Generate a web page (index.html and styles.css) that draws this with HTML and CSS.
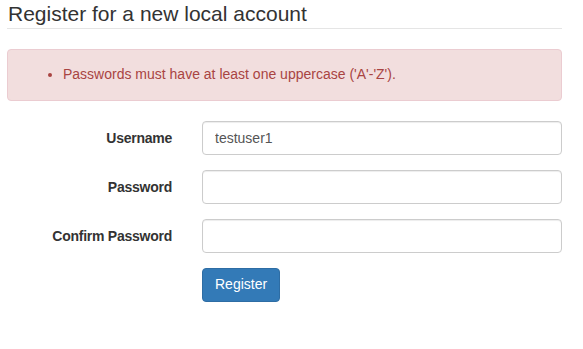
FILE: index.html
```html
<!DOCTYPE html>
<html lang="en">
<head>
    <meta charset="UTF-8">
    <meta name="viewport" content="width=device-width, initial-scale=1.0">
    <title>Register</title>
    <link rel="stylesheet" href="styles.css">
</head>
<body>
    <div class="page">
        <h2 class="page-title">Register for a new local account</h2>
        <hr class="divider">

        <div class="alert alert-danger">
            <ul class="error-list">
                <li>Passwords must have at least one uppercase ('A'-'Z').</li>
            </ul>
        </div>

        <form class="register-form">
            <label class="form-label" for="username">Username</label>
            <input class="form-input" id="username" type="text" value="testuser1">

            <label class="form-label" for="password">Password</label>
            <input class="form-input" id="password" type="password">

            <label class="form-label" for="confirm">Confirm Password</label>
            <input class="form-input" id="confirm" type="password">

            <div class="form-actions">
                <button type="submit" class="btn-primary">Register</button>
            </div>
        </form>
    </div>
</body>
</html>
```

FILE: styles.css
```css
:root {
    --text-primary: #333;
    --text-input: #555;
    --border-input: #ccc;
    --divider: #e5e5e5;
    --danger-bg: #f2dede;
    --danger-border: #ebccd1;
    --danger-text: #a94442;
    --primary: #337ab7;
    --primary-border: #2e6da4;
    --font-family-sans: "Liberation Sans", Arial, sans-serif;
}

*, *::before, *::after {
    box-sizing: border-box;
}

body {
    margin: 0;
    font-family: var(--font-family-sans);
    font-size: 14px;
    line-height: 1.42857;
    color: var(--text-primary);
    background: #fff;
}

.page {
    width: 555px;
    margin-left: 7px;
}

.page-title {
    margin: 0;
    padding: 2px 0 0 1px;
    font-size: 21px;
    font-weight: 400;
    line-height: 24px;
}

.divider {
    margin: 2px 0 20px;
    border: 0;
    border-top: 1px solid var(--divider);
}

.alert {
    padding: 15px;
    border: 1px solid transparent;
    border-radius: 4px;
    margin-bottom: 20px;
}

.alert-danger {
    background-color: var(--danger-bg);
    border-color: var(--danger-border);
    color: var(--danger-text);
}

.error-list {
    margin: 0;
    padding-left: 40px;
}

.register-form {
    display: grid;
    grid-template-columns: 165px 1fr;
    column-gap: 30px;
    row-gap: 15px;
    align-items: start;
}

.form-label {
    padding-top: 8px;
    text-align: right;
    font-weight: 700;
    letter-spacing: -0.25px;
}

.form-input {
    display: block;
    width: 100%;
    height: 34px;
    padding: 6px 12px;
    font-family: inherit;
    font-size: 14px;
    color: var(--text-input);
    background: #fff;
    border: 1px solid var(--border-input);
    border-radius: 4px;
    box-shadow: inset 0 1px 1px rgba(0, 0, 0, 0.075);
}

.form-actions {
    grid-column: 2;
}

.btn-primary {
    height: 34px;
    padding: 6px 12px;
    font-family: inherit;
    font-size: 14px;
    line-height: 1.42857;
    color: #fff;
    background-color: var(--primary);
    border: 1px solid var(--primary-border);
    border-radius: 4px;
    cursor: pointer;
}
```
